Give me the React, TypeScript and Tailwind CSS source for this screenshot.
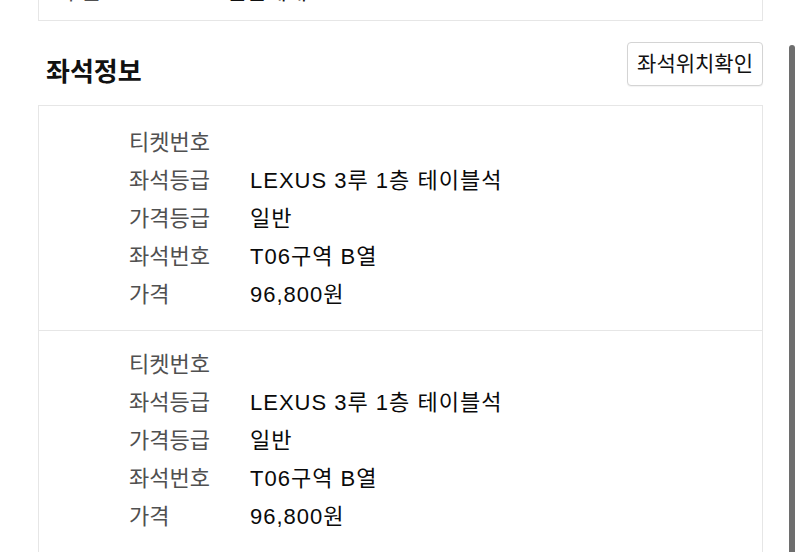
const tickets = [
  {
    no: "",
    grade: "LEXUS 3루 1층 테이블석",
    price: "일반",
    seat: "T06구역 B열",
    amount: "96,800원",
  },
  {
    no: "",
    grade: "LEXUS 3루 1층 테이블석",
    price: "일반",
    seat: "T06구역 B열",
    amount: "96,800원",
  },
];

function Row({ label, value }: { label: string; value: string }) {
  return (
    <div className="flex h-[37.8px] items-center">
      <span className="w-[121px] text-[#505050]">{label}</span>
      <span className="tracking-[1px] text-[#0a0a0a]">{value}</span>
    </div>
  );
}

export default function App() {
  return (
    <div
      className="relative h-[552px] w-[800px] overflow-hidden bg-white"
      style={{ fontFamily: '"Liberation Sans", "Noto Sans CJK KR", sans-serif' }}
    >
      {/* previous card, scrolled mostly out of view */}
      <div className="-mt-[27px] ml-[38px] w-[725px] border-x border-b border-[#e6e6e6] bg-white pb-[10px]">
        <div className="flex h-[37px] items-center pl-[22px] text-[22px] text-[#505050]">
          <span className="w-[165px]">구분</span>
          <span className="text-[#111]">일반예매</span>
        </div>
      </div>

      {/* header */}
      <div className="ml-[38px] mt-[21px] flex w-[725px] items-end justify-between">
        <h2 className="pl-[8px] text-[26px] font-bold leading-[28px] text-[#111]">좌석정보</h2>
        <button className="h-[44px] rounded-[4px] border border-[#d4d4d4] bg-white px-[9px] text-[21px] text-[#111] shadow-[0_1px_1px_rgba(0,0,0,0.05)]">
          좌석위치확인
        </button>
      </div>

      {/* seat card */}
      <div className="ml-[38px] mt-[19px] w-[725px] border border-[#e6e6e6] text-[22px]">
        {tickets.map((t, i) => (
          <div
            key={i}
            className={
              i === 0
                ? "pb-[17px] pl-[90px] pt-[18px]"
                : "border-t border-[#e6e6e6] pb-[17px] pl-[90px] pt-[15px]"
            }
          >
            <Row label="티켓번호" value={t.no} />
            <Row label="좌석등급" value={t.grade} />
            <Row label="가격등급" value={t.price} />
            <Row label="좌석번호" value={t.seat} />
            <Row label="가격" value={t.amount} />
          </div>
        ))}
      </div>

      {/* overlay scrollbar */}
      <div className="absolute right-[5px] top-[45px] h-[520px] w-[6px] rounded-full bg-[#6e6e6e]" />
    </div>
  );
}
